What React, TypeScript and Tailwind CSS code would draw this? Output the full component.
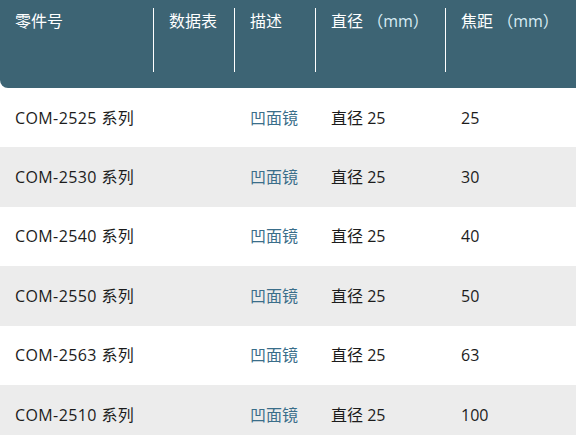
import React from 'react';

const rows = [
  { part: 'COM-2525 系列', focal: '25' },
  { part: 'COM-2530 系列', focal: '30' },
  { part: 'COM-2540 系列', focal: '40' },
  { part: 'COM-2550 系列', focal: '50' },
  { part: 'COM-2563 系列', focal: '63' },
  { part: 'COM-2510 系列', focal: '100' },
];

const cols = ['w-[154px]', 'w-[81px]', 'w-[81px]', 'w-[130px]', 'flex-1'];

const HeaderCell: React.FC<{ className: string; last?: boolean; children: React.ReactNode }> = ({
  className,
  last,
  children,
}) => (
  <div className={`${className} relative pl-[15px] pt-[9px]`}>
    {children}
    {!last && <span className="absolute right-0 top-[8px] h-[64px] w-px bg-white" />}
  </div>
);

export default function App() {
  return (
    <div
      className="w-[576px] h-[435px] overflow-hidden bg-white text-[16px] text-[#1c1c1c]"
      style={{ fontFamily: '"Open Sans", "Noto Sans CJK SC", sans-serif' }}
    >
      <div className="flex h-[88px] bg-[#3d6474] text-white rounded-bl-lg">
        <HeaderCell className={cols[0]}>零件号</HeaderCell>
        <HeaderCell className={cols[1]}>数据表</HeaderCell>
        <HeaderCell className={cols[2]}>描述</HeaderCell>
        <HeaderCell className={cols[3]}>
          直径 <span className="text-[#d8ecf4]">（mm）</span>
        </HeaderCell>
        <HeaderCell className={cols[4]} last>
          焦距 <span className="text-[#d8ecf4]">（mm）</span>
        </HeaderCell>
      </div>
      {rows.map((r, i) => (
        <div
          key={r.part}
          className={`flex h-[59.4px] items-center ${i % 2 === 1 ? 'bg-[#ececec]' : 'bg-white'}`}
        >
          <div className={`${cols[0]} pl-[15px] tracking-[0.4px]`}>{r.part}</div>
          <div className={`${cols[1]} pl-[15px]`}></div>
          <div className={`${cols[2]} pl-[15px] text-[#3a6e8a]`}>凹面镜</div>
          <div className={`${cols[3]} pl-[15px]`}>直径 25</div>
          <div className={`${cols[4]} pl-[15px]`}>{r.focal}</div>
        </div>
      ))}
    </div>
  );
}
